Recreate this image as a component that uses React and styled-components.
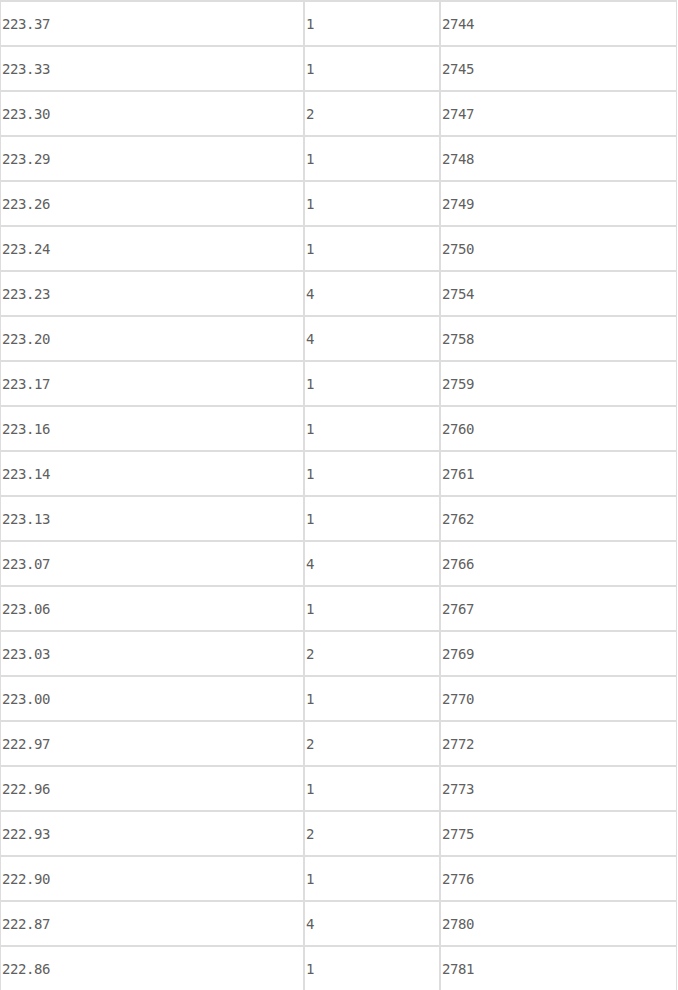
import React from "react";
import styled, { createGlobalStyle } from "styled-components";

const rows = [
  ["223.37", "1", "2744"],
  ["223.33", "1", "2745"],
  ["223.30", "2", "2747"],
  ["223.29", "1", "2748"],
  ["223.26", "1", "2749"],
  ["223.24", "1", "2750"],
  ["223.23", "4", "2754"],
  ["223.20", "4", "2758"],
  ["223.17", "1", "2759"],
  ["223.16", "1", "2760"],
  ["223.14", "1", "2761"],
  ["223.13", "1", "2762"],
  ["223.07", "4", "2766"],
  ["223.06", "1", "2767"],
  ["223.03", "2", "2769"],
  ["223.00", "1", "2770"],
  ["222.97", "2", "2772"],
  ["222.96", "1", "2773"],
  ["222.93", "2", "2775"],
  ["222.90", "1", "2776"],
  ["222.87", "4", "2780"],
  ["222.86", "1", "2781"],
];

// column widths incl. borders: price / count / running total
const widths = [304, 136, 237];

const GlobalStyle = createGlobalStyle`
  body {
    margin: 0;
    background: #fff;
    overflow: hidden;
  }
`;

const Wrapper = styled.div`
  width: 677px;
  border-top: 1px solid #dddddd;
`;

const Table = styled.table`
  border-collapse: separate;
  border-spacing: 0;
  table-layout: fixed;
  width: 677px;
`;

const Cell = styled.td`
  box-sizing: border-box;
  width: ${(p) => p.$w}px;
  height: 45px;
  padding: 0 0 0 1px;
  border: 1px solid #dddddd;
  font-family: "DejaVu Sans Mono", "Liberation Mono", monospace;
  font-size: 14px;
  letter-spacing: -0.45px;
  color: #606060;
  vertical-align: middle;
  text-align: left;
`;

export default function App() {
  return (
    <>
      <GlobalStyle />
      <Wrapper>
        <Table>
          <tbody>
            {rows.map((r, i) => (
              <tr key={i}>
                {r.map((v, j) => (
                  <Cell key={j} $w={widths[j]}>
                    {v}
                  </Cell>
                ))}
              </tr>
            ))}
          </tbody>
        </Table>
      </Wrapper>
    </>
  );
}
